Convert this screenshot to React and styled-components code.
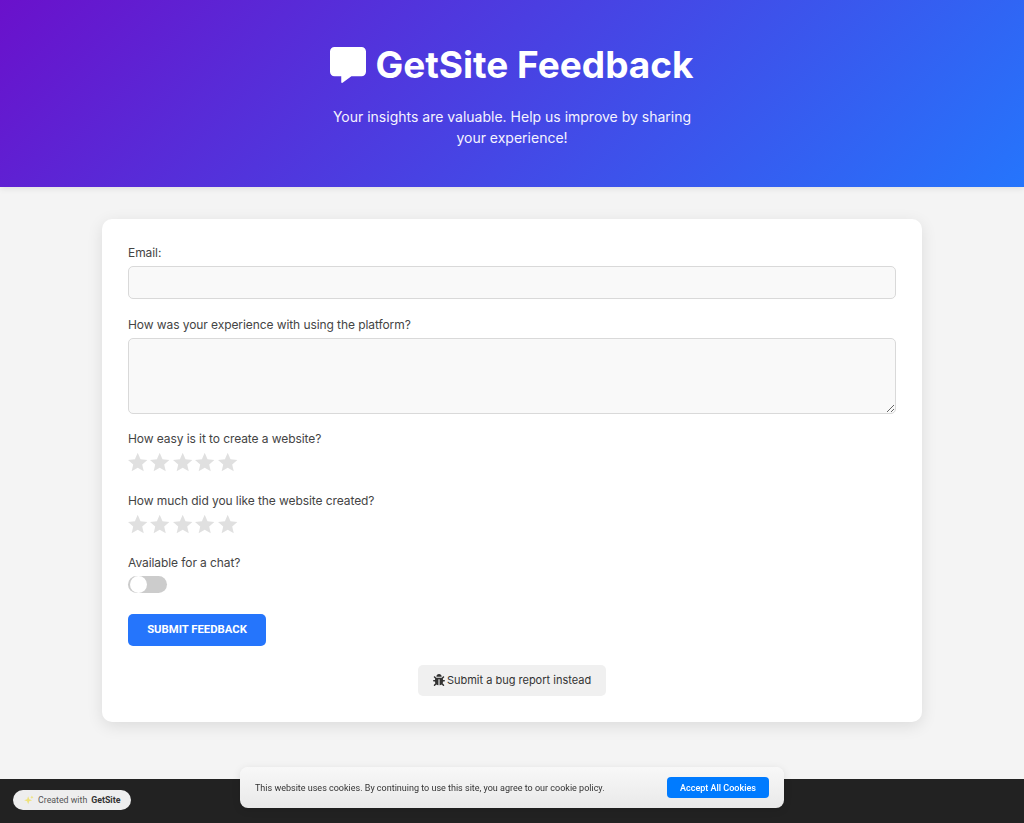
import styled, { createGlobalStyle } from "styled-components";
import { FaBug, FaCommentAlt } from "react-icons/fa";

const GlobalStyle = createGlobalStyle`
  * {
    box-sizing: border-box;
  }
  body {
    margin: 0;
    background: #f4f4f4;
    font-family: "Inter", "Liberation Sans", sans-serif;
    color: #333;
  }
`;

const Page = styled.div`
  min-height: 823px;
  display: flex;
  flex-direction: column;
`;

const Header = styled.header`
  height: 187px;
  padding-top: 43px;
  background: linear-gradient(135deg, #6a11cb 0%, #2575fc 100%);
  color: #fff;
  text-align: center;
  box-shadow: 0 2px 6px rgba(0, 0, 0, 0.08);
`;

const Title = styled.h1`
  margin: 0;
  height: 44px;
  display: flex;
  align-items: center;
  justify-content: center;
  gap: 9px;
  font-size: 37px;
  font-weight: 700;
  line-height: 44px;
`;

const Subtitle = styled.p`
  width: 370px;
  margin: 19px auto 0;
  font-size: 14px;
  line-height: 21px;
  color: #f5f3ff;
`;

const Card = styled.main`
  width: 80%;
  height: 503px;
  margin: 32px auto 0;
  padding: 25.6px;
  background: #fff;
  border-radius: 10px;
  box-shadow: 0 4px 16px rgba(0, 0, 0, 0.1);
`;

const Label = styled.label`
  display: block;
  font-size: 12px;
  letter-spacing: -0.08px;
  line-height: 15px;
  color: #444;
`;

const TextInput = styled.input`
  display: block;
  width: 100%;
  height: 33px;
  margin: 6.4px 0 18px;
  background: #f9f9f9;
  border: 1px solid #d9d9d9;
  border-radius: 5px;
`;

const TextArea = styled.textarea`
  display: block;
  width: 100%;
  height: 76px;
  margin: 6px 0 17px;
  background: #f9f9f9;
  border: 1px solid #d9d9d9;
  border-radius: 5px;
`;

const Stars = styled.div`
  display: flex;
  height: 24px;
  margin: 4px 0 19px;
`;

const Star = styled.svg`
  width: 22.4px;
  height: 24px;
  fill: #e0e0e0;
`;

const Toggle = styled.div`
  position: relative;
  width: 39px;
  height: 17px;
  margin: 6px 0 21px;
  background: #ccc;
  border-radius: 9px;
`;

const Knob = styled.span`
  position: absolute;
  left: 2px;
  top: 0;
  width: 17px;
  height: 17px;
  border-radius: 50%;
  background: #fff;
`;

const SubmitButton = styled.button`
  display: block;
  width: 138px;
  height: 32px;
  padding: 0;
  background: #2575fc;
  color: #fff;
  border: 0;
  border-radius: 5px;
  font-family: "Roboto", sans-serif;
  font-size: 11.3px;
  font-weight: 700;
`;

const BugRow = styled.div`
  display: flex;
  justify-content: center;
  margin-top: 19px;
`;

const BugButton = styled.button`
  display: flex;
  align-items: center;
  justify-content: center;
  gap: 2px;
  width: 188px;
  height: 31px;
  padding: 0;
  background: #f0f0f0;
  color: #333;
  border: 0;
  border-radius: 5px;
  font-family: "Inter", sans-serif;
  font-size: 11px;
`;

const Footer = styled.footer`
  height: 44px;
  margin-top: auto;
  background: #222;
`;

const Badge = styled.div`
  position: fixed;
  left: 13px;
  top: 790px;
  width: 118px;
  height: 20px;
  display: flex;
  align-items: center;
  padding-left: 11px;
  gap: 4px;
  background: #eee;
  border-radius: 10px;
  font-family: "Roboto", sans-serif;
  font-size: 8.8px;
  color: #555;
  b {
    color: #333;
  }
`;

const Spark = styled.svg`
  width: 10px;
  height: 10px;
  fill: #efe27a;
`;

const CookieBar = styled.div`
  position: fixed;
  left: 240px;
  top: 767px;
  width: 544px;
  height: 41px;
  display: flex;
  align-items: center;
  justify-content: space-between;
  padding: 0 15px;
  background: linear-gradient(180deg, #f8f8f8, #e9e9e9);
  border-radius: 8px;
  box-shadow: 0 2px 8px rgba(0, 0, 0, 0.1);
  font-family: "Roboto", sans-serif;
  font-size: 9px;
  color: #333;
`;

const AcceptButton = styled.button`
  width: 102px;
  height: 21px;
  padding: 0;
  background: #007bff;
  color: #fff;
  border: 0;
  border-radius: 4px;
  font-family: "Roboto", sans-serif;
  font-size: 9px;
  font-weight: 500;
`;

const StarRow = () => (
  <Stars>
    {[0, 1, 2, 3, 4].map((i) => (
      <Star key={i} viewBox="1.6 0 24 24">
        <path d="M12 2.2l3 6.9 7.4.7-5.6 4.9 1.7 7.3-6.5-3.9-6.5 3.9 1.7-7.3L1.600 9.800l7.400-.7z" />
      </Star>
    ))}
  </Stars>
);

export default function App() {
  return (
    <Page>
      <GlobalStyle />
      <Header>
        <Title>
          <FaCommentAlt size={36} />
          GetSite Feedback
        </Title>
        <Subtitle>
          Your insights are valuable. Help us improve by sharing your experience!
        </Subtitle>
      </Header>
      <Card>
        <Label>Email:</Label>
        <TextInput type="email" />
        <Label>How was your experience with using the platform?</Label>
        <TextArea />
        <Label>How easy is it to create a website?</Label>
        <StarRow />
        <Label>How much did you like the website created?</Label>
        <StarRow />
        <Label>Available for a chat?</Label>
        <Toggle>
          <Knob />
        </Toggle>
        <SubmitButton>SUBMIT FEEDBACK</SubmitButton>
        <BugRow>
          <BugButton>
            <FaBug size={12} />
            Submit a bug report instead
          </BugButton>
        </BugRow>
      </Card>
      <Footer />
      <Badge>
        <Spark viewBox="0 0 24 24">
          <path d="M10 3l2.500 7 7 2.500-7 2.500-2.500 7-2.500-7-7-2.500 7-2.500zM19 1l1.200 3 2.800 1.200-2.800 1.200L19 9.400l-1.200-3-2.800-1.200 2.800-1.200z" />
        </Spark>
        Created with <b>GetSite</b>
      </Badge>
      <CookieBar>
        This website uses cookies. By continuing to use this site, you agree to our cookie policy.
        <AcceptButton>Accept All Cookies</AcceptButton>
      </CookieBar>
    </Page>
  );
}
